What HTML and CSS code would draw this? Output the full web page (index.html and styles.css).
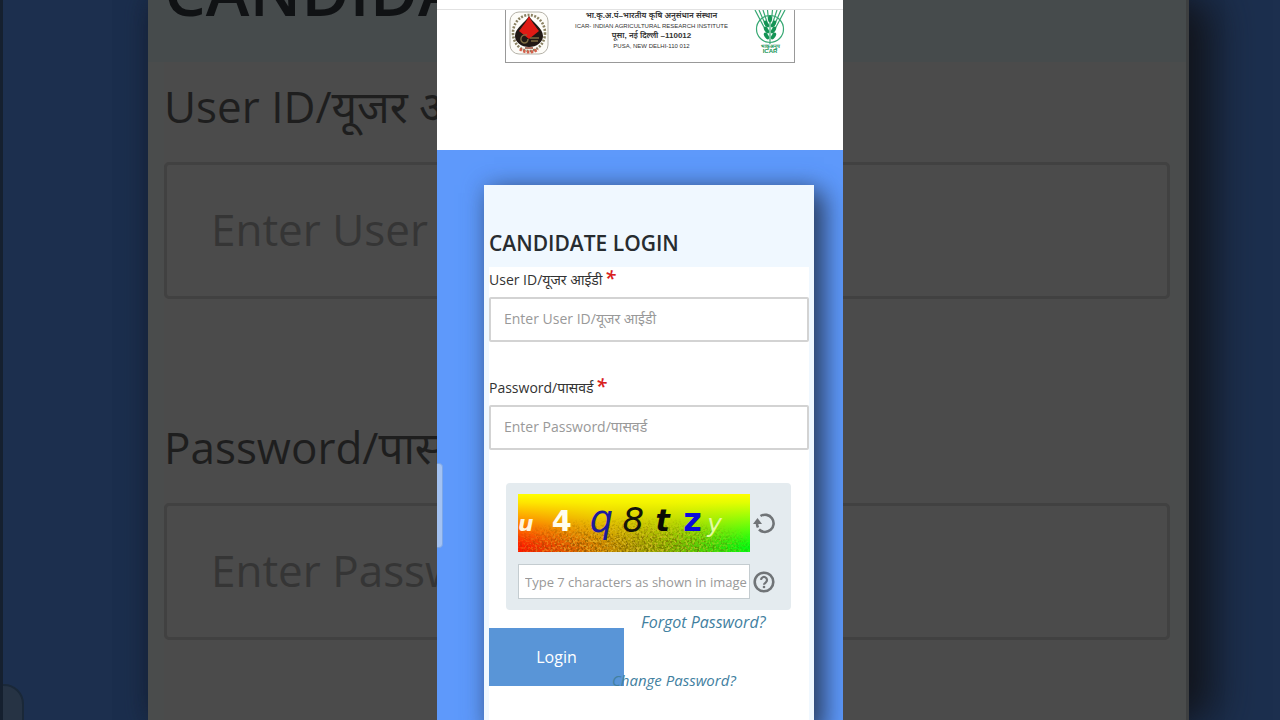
FILE: index.html
```html
<!DOCTYPE html>
<html lang="en">
<head>
<meta charset="utf-8">
<meta name="viewport" content="width=device-width, initial-scale=1">
<title>Candidate Login</title>
<link rel="stylesheet" href="styles.css">
</head>
<body>
<div class="stage">
  <div class="backdrop" aria-hidden="true">
    <div class="big-card">
      <div class="big-title">CANDIDATE LOGIN</div>
      <div class="big-body">
        <label class="big-label" for="big-user">User ID/यूजर आईडी</label>
        <input class="big-input" id="big-user" type="text" placeholder="Enter User ID/यूजर आईडी" tabindex="-1">
        <label class="big-label" for="big-pass">Password/पासवर्ड</label>
        <input class="big-input" id="big-pass" type="password" placeholder="Enter Password/पासवर्ड" tabindex="-1">
      </div>
    </div>
    <span class="big-handle"></span>
  </div>

  <main class="phone">
    <div class="top-edge"></div>
    <header class="masthead">
      <div class="banner">
        <svg class="seal" viewBox="0 0 40 44" role="img" aria-label="IARI seal">
          <rect x="1" y="1" width="38" height="42" rx="9" fill="#fdfcf8" stroke="#b5b2a8" stroke-width="1"/>
          <ellipse cx="20" cy="22" rx="16" ry="18" fill="none" stroke="#8a8162" stroke-width="2.600" stroke-dasharray="2 1.4"/>
          <path d="M11 38a16 18 0 0 0 18 0" fill="none" stroke="#d4604c" stroke-width="3" stroke-dasharray="2.400 1.4"/>
          <path d="M20 5c3 6 14 12 14 20a14 11 0 0 1-28 0c0-8 11-14 14-20z" fill="#211815"/>
          <path d="M20 5c2 5 7 11 10 15l-10 8-10-8c3-4 8-10 10-15z" fill="#e01a14"/>
          <path d="M18 24c-7-1-8 7-3 8 3 0 4-2 4-4M21 27h9M22 30h7" fill="none" stroke="#7c6b42" stroke-width="1.4"/>
          <path d="M16 37h8" stroke="#8b3a25" stroke-width="1.4"/>
        </svg>
        <div class="banner-text">
          <strong>भा.कृ.अ.पं–भारतीय कृषि अनुसंधान संस्थान</strong>
          <span>ICAR- INDIAN AGRICULTURAL RESEARCH INSTITUTE</span>
          <strong>पूसा, नई दिल्ली –110012</strong>
          <span>PUSA, NEW DELHI-110 012</span>
        </div>
        <div class="icar">
          <svg class="icar-mark" viewBox="0 0 32 34" role="img" aria-label="ICAR wheat emblem">
            <g fill="none" stroke="#37a873" stroke-width="1.2">
              <circle cx="16" cy="19" r="13.5"/>
              <path d="M1 0l10 19M5 0l7 16M9 0l4 12M13.500 0l1 10M18.500 0l-1 10M23 0l-4 12M27 0l-7 16M31 0L21 19M16 10v24"/>
            </g>
            <g fill="#149455">
              <ellipse cx="16" cy="9" rx="2" ry="3.4"/>
              <ellipse cx="12.5" cy="14" rx="2" ry="3.8" transform="rotate(-32 12.5 14)"/>
              <ellipse cx="19.500" cy="14" rx="2" ry="3.8" transform="rotate(32 19.500 14)"/>
              <ellipse cx="12.5" cy="20" rx="2" ry="3.8" transform="rotate(-32 12.5 20)"/>
              <ellipse cx="19.500" cy="20" rx="2" ry="3.8" transform="rotate(32 19.500 20)"/>
              <ellipse cx="12.5" cy="26" rx="2" ry="3.8" transform="rotate(-32 12.5 26)"/>
              <ellipse cx="19.500" cy="26" rx="2" ry="3.8" transform="rotate(32 19.500 26)"/>
            </g>
          </svg>
          <span class="icar-hi">भाकृअनुप</span>
          <span class="icar-en">ICAR</span>
        </div>
      </div>
    </header>

    <section class="blue">
      <form class="card">
        <h1 class="title">CANDIDATE LOGIN</h1>
        <div class="body">
          <label class="label" for="user">User ID/यूजर आईडी<span class="star">*</span></label>
          <input class="input" id="user" type="text" placeholder="Enter User ID/यूजर आईडी">
          <label class="label" for="pass">Password/पासवर्ड<span class="star">*</span></label>
          <input class="input" id="pass" type="password" placeholder="Enter Password/पासवर्ड">

          <div class="captcha">
            <svg class="captcha-img" viewBox="0 0 233 58" preserveAspectRatio="none" role="img" aria-label="Captcha characters">
              <defs>
                <linearGradient id="across" x1="0" x2="1" y1="0" y2="0">
                  <stop offset="0" stop-color="#ff1800"/><stop offset=".35" stop-color="#d08000"/>
                  <stop offset=".65" stop-color="#84b000"/><stop offset="1" stop-color="#00ff10"/>
                </linearGradient>
                <linearGradient id="down" x1="0" x2="0" y1="0" y2="1">
                  <stop offset="0" stop-color="#ffff00"/><stop offset=".15" stop-color="#ffff00" stop-opacity=".88"/>
                  <stop offset=".9" stop-color="#ffff00" stop-opacity="0"/>
                </linearGradient>
                <radialGradient id="spot" cx=".48" cy="1" r=".62">
                  <stop offset="0" stop-color="#fff"/><stop offset=".5" stop-color="#bbb"/><stop offset="1" stop-color="#000"/>
                </radialGradient>
                <mask id="fade"><rect width="233" height="58" fill="url(#spot)"/></mask>
                <filter id="grain" x="0" y="0" width="1" height="1" color-interpolation-filters="sRGB">
                  <feTurbulence type="fractalNoise" baseFrequency=".45" numOctaves="2" seed="4"/>
                  <feColorMatrix values="0 0 0 0 .4  0 0 0 0 .3  0 0 0 0 0  6 0 0 0 -2.900"/>
                </filter>
                <filter id="sparkle" x="0" y="0" width="1" height="1" color-interpolation-filters="sRGB">
                  <feTurbulence type="fractalNoise" baseFrequency=".45" numOctaves="2" seed="9"/>
                  <feColorMatrix values="0 0 0 0 .95  0 0 0 0 .8  0 0 0 0 .2  6 0 0 0 -3"/>
                </filter>
              </defs>
              <rect width="233" height="58" fill="url(#across)"/>
              <rect width="233" height="58" fill="url(#down)"/>
              <g mask="url(#fade)">
                <rect width="233" height="58" filter="url(#grain)" opacity=".6"/>
                <rect width="233" height="58" filter="url(#sparkle)" opacity=".6"/>
              </g>
              <g class="glyphs">
                <text x="0" y="37" font-size="22" font-weight="700" font-style="italic" fill="#fff4dc">u</text>
                <text x="34" y="37" font-size="29" font-weight="700" fill="#fffdf0">4</text>
                <text x="72" y="38" font-size="37" font-style="italic" fill="#1d1a9c">q</text>
                <text x="105" y="38" font-size="34" font-style="italic" fill="#14140a">8</text>
                <text x="138" y="37" font-size="30" font-weight="700" font-style="italic" fill="#0a0a05">t</text>
                <text x="166" y="37" font-size="32" font-weight="700" fill="#0b0bdc">z</text>
                <text x="190" y="38" font-size="25" font-style="italic" fill="#e4fba0">y</text>
              </g>
            </svg>
            <button class="icon-btn" type="button" aria-label="Refresh captcha">
              <svg viewBox="0 0 24 24" fill="none" stroke="#707477" stroke-width="2.600">
                <path d="M8.500 5A8.600 8.600 0 1 1 7 18.500M5 12.500c0 2 .5 3 1 4"/><path d="M1 13l4.500-6L10 13z" fill="#707477" stroke="none"/>
              </svg>
            </button>
            <input class="captcha-input" type="text" aria-label="Captcha" placeholder="Type 7 characters as shown in image">
            <button class="icon-btn" type="button" aria-label="Captcha help">
              <svg viewBox="0 0 24 24" fill="none" stroke="#707477" stroke-width="2.600">
                <circle cx="12" cy="12" r="9.300"/><path d="M9 9.800a3 3 0 1 1 4.800 2.600c-1.200.9-1.800 1.300-1.800 2.400" stroke-width="2.200"/><circle cx="12" cy="17" r="1.300" fill="#707477" stroke="none"/>
              </svg>
            </button>
          </div>

          <div class="actions">
            <button class="login" type="button">Login</button>
            <div class="links">
              <a class="forgot" href="#forgot">Forgot Password?</a>
              <a class="change" href="#change">Change Password?</a>
            </div>
          </div>
        </div>
      </form>
    </section>
    <span class="handle"></span>
  </main>
</div>
</body>
</html>
```
FILE: styles.css
```css
* { box-sizing: border-box; }

body {
  margin: 0;
  font-family: "Open Sans", "Noto Sans", sans-serif;
  color: #333;
  background: #1c2f4e;
}

button, input { font-family: inherit; }

.stage {
  display: grid;
  grid-template-columns: minmax(0, 1fr);
  grid-template-rows: minmax(0, 1fr);
  height: 100vh;
  overflow: hidden;
}

.backdrop, .phone {
  grid-area: 1 / 1;
  position: relative;
  min-height: 0;
}

/* Dimmed enlargement behind the phone column */
.backdrop {
  display: flex;
  padding: 0 91px 0 145px;
  border-left: 3px solid #15202f;
  background: #1c2f4e;
  overflow: hidden;
}

.big-card {
  flex: 1;
  min-width: 0;
  padding: 0 16px;
  background: #4a4c4c;
  border-right: 3px solid #3d3f40;
  box-shadow: 24px 0 40px #12151c, 0 0 24px #16233a;
}

.big-title {
  display: flex;
  align-items: flex-end;
  height: 62px;
  margin: 0 -16px;
  padding: 0 16px 48px;
  background: #464b4c;
  color: #101214;
  font-size: 66px;
  font-weight: 600;
  line-height: 48px;
}

.big-body {
  min-height: 100%;
  background: #4b4b4b;
}

.big-label {
  display: block;
  height: 100px;
  padding-top: 14px;
  font-size: 44px;
  line-height: 60px;
  color: #1e1e1e;
}

.big-input {
  display: block;
  width: 100%;
  height: 137px;
  margin-bottom: 104px;
  padding: 0 44px 4px;
  border: 3px solid #414141;
  border-radius: 5px;
  background: #4b4b4b;
  font-size: 44px;
}

.big-input::placeholder { color: #353535; opacity: 1; }

.big-handle {
  position: absolute;
  left: -3px;
  bottom: -48px;
  width: 24px;
  height: 84px;
  border: 2px solid #1a2838;
  border-radius: 0 20px 20px 0;
  background: #263344;
}

/* Phone column */
.phone {
  display: flex;
  flex-direction: column;
  justify-self: center;
  width: 406px;
  max-width: 100%;
  background: #fff;
  overflow: hidden;
}

.top-edge {
  flex: none;
  height: 10px;
  border-bottom: 1px solid #e2e2e2;
}

.masthead {
  flex: none;
  height: 140px;
  padding: 0 48px 0 68px;
}

.banner {
  display: flex;
  justify-content: space-between;
  height: 53px;
  padding: 0 8px 0 3px;
  border: 1px solid #999;
  border-top: 0;
}

.seal {
  flex: none;
  width: 40px;
  height: 44px;
  margin-top: 1px;
}

.banner-text {
  display: flex;
  flex-direction: column;
  align-items: center;
  padding-top: 1px;
  font: 6px/10px "Liberation Sans", "Noto Sans", sans-serif;
  white-space: nowrap;
}

.banner-text strong { font-size: 8px; font-weight: 600; }

.icar {
  display: flex;
  flex-direction: column;
  align-items: center;
  width: 32px;
  color: #149455;
  font: 700 5px/5px "Liberation Sans", sans-serif;
}

.icar-mark { flex: none; width: 32px; height: 34px; }
.icar-en { font-size: 6px; }

.blue {
  flex: 1;
  min-height: 0;
  padding: 35px 29px 0 47px;
  background: #5e99fb;
}

.card {
  min-height: 100%;
  padding: 0 5px;
  background: #f0f8ff;
  box-shadow: 10px 8px 24px #2c3f63, 0 0 20px #5080cc;
}

.title {
  margin: 0;
  padding: 42px 0 8px;
  color: #272c30;
  font-size: 21px;
  font-weight: 600;
  line-height: 32px;
}

.body {
  display: flex;
  flex-direction: column;
  min-height: 460px;
  background: #fff;
}

.label {
  height: 30px;
  font-size: 14px;
  line-height: 26px;
}

.star {
  margin-left: 2px;
  color: #d8201c;
  font-size: 20px;
  font-style: italic;
  font-weight: 600;
  line-height: 20px;
}

.input {
  width: 100%;
  height: 45px;
  margin-bottom: 33px;
  padding: 0 13px 2px;
  border: 2px solid #d3d3d3;
  border-radius: 2px;
  background: #fff;
  font-size: 14px;
}

.input::placeholder, .captcha-input::placeholder { color: #999; opacity: 1; }

.captcha {
  display: grid;
  grid-template-columns: 1fr 24px;
  gap: 12px 2px;
  align-items: center;
  margin: 0 18px 0 17px;
  padding: 11px 15px 11px 12px;
  border-radius: 4px;
  background: #e4ebef;
}

.captcha-img { display: block; width: 100%; height: 58px; }
.glyphs { font-family: "DejaVu Sans", sans-serif; }

.captcha-input {
  width: 100%;
  height: 35px;
  padding: 0 0 0 6px;
  border: 1px solid #c4ccd0;
  background: #fff;
  font-size: 13px;
}

.icon-btn {
  width: 24px;
  height: 24px;
  padding: 0;
  border: 0;
  background: none;
}

.icon-btn svg { display: block; width: 24px; height: 24px; }

.actions { display: flex; }

.login {
  width: 135px;
  height: 58px;
  margin-top: 18px;
  border: 0;
  background: #5995d7;
  color: #fff;
  font-size: 16px;
}

.links {
  display: flex;
  flex-direction: column;
  align-items: flex-start;
  gap: 38px;
  padding-top: 2px;
  font-style: italic;
  line-height: 20px;
}

.links a { color: #42809f; text-decoration: none; }
.forgot { margin-left: 17px; font-size: 16px; }
.change { z-index: 1; margin-left: -12px; font-size: 15px; }

.handle {
  position: absolute;
  left: -6px;
  top: 463px;
  width: 12px;
  height: 85px;
  border: 1px solid #7da6e6;
  border-radius: 4px;
  background: #a3c2f2;
}
```
